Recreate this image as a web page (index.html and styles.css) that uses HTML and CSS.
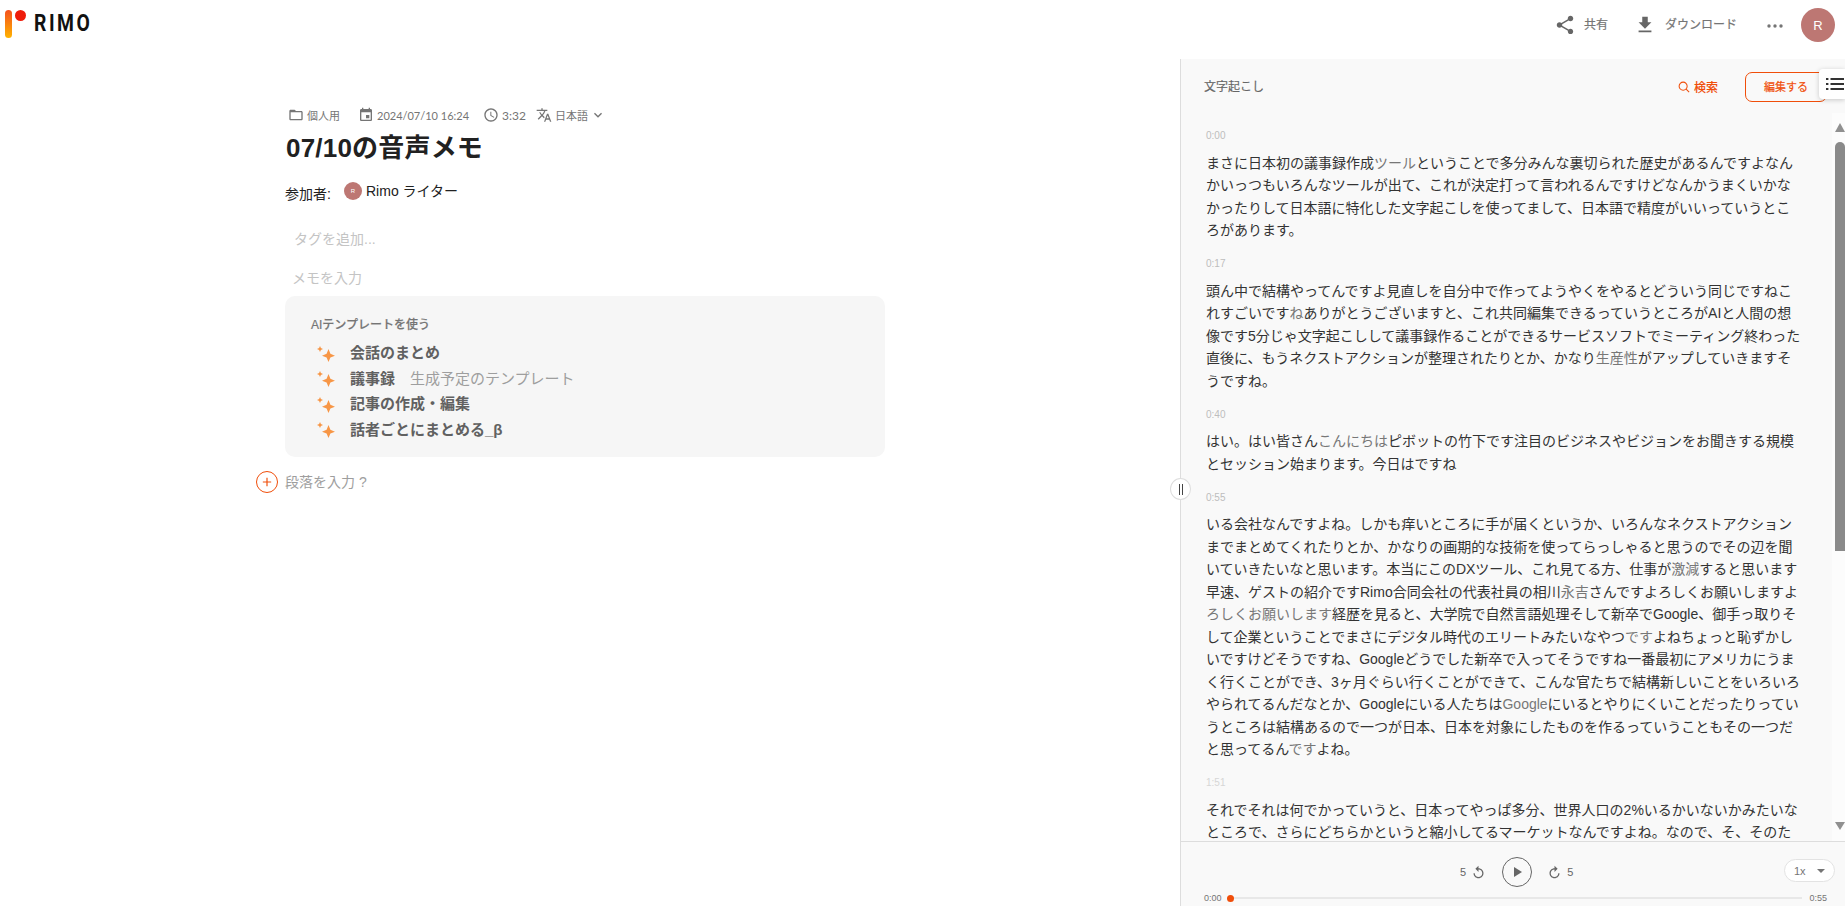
FILE: index.html
```html
<!DOCTYPE html>
<html lang="ja">
<head>
    <meta charset="UTF-8">
    <title>07/10の音声メモ - Rimo</title>
    <link rel="stylesheet" href="styles.css">
</head>
<body>

<header class="topbar">
    <div class="logo">
        <div class="logo-mark"><span class="logo-bar"></span><span class="logo-dot"></span></div>
        <span class="logo-text">RIMO</span>
    </div>
    <div class="top-actions">
        <div class="top-action top-share">
            <svg class="icon-share" viewBox="0 0 24 24"><path d="M18 16.08c-.76 0-1.44.3-1.96.77L8.91 12.7c.05-.23.09-.46.09-.7s-.04-.47-.09-.7l7.05-4.11c.54.5 1.25.81 2.04.81 1.66 0 3-1.34 3-3s-1.34-3-3-3-3 1.34-3 3c0 .24.04.47.09.7L8.04 9.81C7.5 9.31 6.79 9 6 9c-1.66 0-3 1.34-3 3s1.34 3 3 3c.79 0 1.5-.31 2.04-.81l7.12 4.16c-.05.21-.08.43-.08.65 0 1.61 1.31 2.92 2.92 2.92 1.61 0 2.92-1.31 2.92-2.92s-1.31-2.92-2.92-2.92z"/></svg>
            <span>共有</span>
        </div>
        <div class="top-action top-download">
            <svg class="icon-download" viewBox="0 0 24 24"><path d="M19 9h-4V3H9v6H5l7 7 7-7zM5 18v2h14v-2H5z"/></svg>
            <span>ダウンロード</span>
        </div>
        <svg class="icon-more" viewBox="0 0 16 4"><circle cx="2" cy="2" r="1.7"/><circle cx="8" cy="2" r="1.7"/><circle cx="14" cy="2" r="1.7"/></svg>
        <div class="avatar">R</div>
    </div>
</header>

<main class="layout">
    <section class="doc">
        <div class="meta">
            <svg class="meta-icon" viewBox="0 0 24 24"><path d="M20 6h-8l-2-2H4c-1.1 0-1.99.9-1.99 2L2 18c0 1.1.9 2 2 2h16c1.1 0 2-.9 2-2V8c0-1.1-.9-2-2-2zm0 12H4V8h16v10z"/></svg>
            <span class="meta-text meta-folder">個人用</span>
            <svg class="meta-icon" viewBox="0 0 24 24"><path d="M17 12h-5v5h5v-5zM16 1v2H8V1H6v2H5c-1.11 0-1.99.9-1.99 2L3 19c0 1.1.89 2 2 2h14c1.1 0 2-.9 2-2V5c0-1.1-.9-2-2-2h-1V1h-2zm3 18H5V8h14v11z"/></svg>
            <span class="meta-text meta-date">2024/07/10 16:24</span>
            <svg class="meta-icon" viewBox="0 0 24 24"><path d="M11.99 2C6.47 2 2 6.48 2 12s4.47 10 9.99 10C17.52 22 22 17.52 22 12S17.52 2 11.99 2zM12 20c-4.42 0-8-3.58-8-8s3.58-8 8-8 8 3.58 8 8-3.58 8-8 8zm.5-13H11v6l5.25 3.15.75-1.23-4.5-2.67z"/></svg>
            <span class="meta-text meta-time">3:32</span>
            <svg class="meta-icon" viewBox="0 0 24 24"><path d="M12.87 15.07l-2.54-2.51.03-.03c1.74-1.94 2.98-4.17 3.71-6.53H17V4h-7V2H8v2H1v1.99h11.17C11.5 7.92 10.44 9.75 9 11.35 8.07 10.32 7.3 9.19 6.69 8h-2c.73 1.63 1.73 3.17 2.98 4.56l-5.09 5.02L4 19l5-5 3.11 3.11.76-2.04zM18.5 10h-2L12 22h2l1.12-3h4.75L21 22h2l-4.5-12zm-2.62 7l1.62-4.33L19.12 17h-3.24z"/></svg>
            <span class="meta-text">日本語</span>
            <svg class="meta-icon meta-chevron" viewBox="0 0 24 24"><path d="M16.59 8.59L12 13.17 7.41 8.59 6 10l6 6 6-6z"/></svg>
        </div>

        <h1>07/10の音声メモ</h1>

        <div class="participants">
            <span class="participants-label">参加者:</span>
            <span class="avatar avatar-small">R</span>
            <span class="participant-name">Rimo ライター</span>
        </div>

        <div class="placeholder placeholder-tag">タグを追加...</div>
        <div class="placeholder placeholder-memo">メモを入力</div>

        <div class="ai-box">
            <div class="ai-title">AIテンプレートを使う</div>
            <div class="ai-item">
                <svg class="sparkle" viewBox="0 0 18 18"><path d="M11.500 5l1.900 4.800 4.600 1.900-4.600 1.900-1.900 4.400-1.900-4.400L5 11.700l4.600-1.900z"/><path d="M3 2l.9 2.100L6 5l-2.100.9L3 8l-.9-2.100L0 5l2.100-.9z"/></svg>
                <b>会話のまとめ</b>
            </div>
            <div class="ai-item">
                <svg class="sparkle" viewBox="0 0 18 18"><path d="M11.500 5l1.900 4.800 4.600 1.900-4.600 1.900-1.900 4.400-1.900-4.400L5 11.700l4.600-1.900z"/><path d="M3 2l.9 2.100L6 5l-2.100.9L3 8l-.9-2.100L0 5l2.100-.9z"/></svg>
                <b>議事録</b>
                <span class="ai-note">生成予定のテンプレート</span>
            </div>
            <div class="ai-item">
                <svg class="sparkle" viewBox="0 0 18 18"><path d="M11.500 5l1.900 4.800 4.600 1.900-4.600 1.900-1.900 4.400-1.900-4.400L5 11.700l4.600-1.900z"/><path d="M3 2l.9 2.100L6 5l-2.100.9L3 8l-.9-2.100L0 5l2.100-.9z"/></svg>
                <b>記事の作成・編集</b>
            </div>
            <div class="ai-item">
                <svg class="sparkle" viewBox="0 0 18 18"><path d="M11.500 5l1.900 4.800 4.600 1.900-4.600 1.900-1.900 4.400-1.900-4.400L5 11.700l4.600-1.900z"/><path d="M3 2l.9 2.100L6 5l-2.100.9L3 8l-.9-2.100L0 5l2.100-.9z"/></svg>
                <b>話者ごとにまとめる_β</b>
            </div>
        </div>

        <div class="add-row">
            <span class="add-circle">
                <svg viewBox="0 0 12 12"><path d="M6 1v10M1 6h10"/></svg>
            </span>
            <span class="add-text">段落を入力 ?</span>
        </div>
    </section>

    <aside class="panel">
        <div class="splitter"><span></span><span></span></div>
        <div class="list-toggle">
            <svg viewBox="0 0 18 14"><path d="M0 1h2.400v2H0zM4.500 1H18v2H4.500zM0 6h2.400v2H0zM4.500 6H18v2H4.500zM0 11h2.400v2H0zM4.500 11H18v2H4.500z"/></svg>
        </div>

        <div class="panel-head">
            <span class="panel-title">文字起こし</span>
            <div class="panel-search">
                <svg viewBox="0 0 14 14"><circle cx="6" cy="6" r="4.700"/><path d="M9.500 9.500L13 13"/></svg>
                <span>検索</span>
            </div>
            <div class="edit-button">編集する</div>
        </div>

        <div class="transcript-wrap">
            <div class="transcript">
                <div class="stamp">0:00</div>
                <p>まさに日本初の議事録作成<span class="dim">ツール</span>ということで多分みんな裏切られた歴史があるんですよなん<br>かいっつもいろんなツールが出て、これが決定打って言われるんですけどなんかうまくいかな<br>かったりして日本語に特化した文字起こしを使ってまして、日本語で精度がいいっていうとこ<br>ろがあります。</p>

                <div class="stamp">0:17</div>
                <p>頭ん中で結構やってんですよ見直しを自分中で作ってようやくをやるとどういう同じですねこ<br>れすごいです<span class="dim">ね</span>ありがとうございますと、これ共同編集できるっていうところがAIと人間の想<br>像です5分じゃ文字起こしして議事録作ることができるサービスソフトでミーティング終わった<br>直後に、もうネクストアクションが整理されたりとか、かなり<span class="dim">生産性</span>がアップしていきますそ<br>うですね。</p>

                <div class="stamp">0:40</div>
                <p>はい。はい皆さん<span class="dim">こんにちは</span>ピボットの竹下です注目のビジネスやビジョンをお聞きする規模<br>とセッション始まります。今日はですね</p>

                <div class="stamp">0:55</div>
                <p>いる会社なんですよね。しかも痒いところに手が届くというか、いろんなネクストアクション<br>までまとめてくれたりとか、かなりの画期的な技術を使ってらっしゃると思うのでその辺を聞<br>いていきたいなと思います。本当にこのDXツール、これ見てる方、仕事が<span class="dim">激減</span>すると思います<br>早速、ゲストの紹介ですRimo合同会社の代表社員の相川<span class="dim">永吉</span>さんですよろしくお願いしますよ<br><span class="dim">ろしくお願いします</span>経歴を見ると、大学院で自然言語処理そして新卒でGoogle、御手っ取りそ<br>して企業ということでまさにデジタル時代のエリートみたいなやつ<span class="dim">です</span>よねちょっと恥ずかし<br>いですけどそうですね、Googleどうでした新卒で入ってそうですね一番最初にアメリカにうま<br>く行くことができ、3ヶ月ぐらい行くことができて、こんな官たちで結構新しいことをいろいろ<br>やられてるんだなとか、Googleにいる人たちは<span class="dim">Google</span>にいるとやりにくいことだったりってい<br>うところは結構あるので一つが日本、日本を対象にしたものを作るっていうこともその一つだ<br>と思ってるん<span class="dim">です</span>よね。</p>

                <div class="stamp stamp-light">1:51</div>
                <p>それでそれは何でかっていうと、日本ってやっぱ多分、世界人口の2%いるかいないかみたいな<br>ところで、さらにどちらかというと縮小してるマーケットなんですよね。なので、そ、そのた</p>
            </div>
            <div class="scrollbar">
                <span class="scroll-up"></span>
                <span class="scroll-thumb"></span>
                <span class="scroll-down"></span>
            </div>
        </div>

        <div class="player">
            <div class="player-controls">
                <span>5</span>
                <svg class="skip-icon" viewBox="0 0 24 24"><path d="M12 5V1L7 6l5 5V7c3.310 0 6 2.690 6 6s-2.690 6-6 6-6-2.690-6-6H4c0 4.420 3.580 8 8 8s8-3.580 8-8-3.580-8-8-8z"/></svg>
                <div class="play-button">
                    <svg viewBox="0 0 8 10"><path d="M0 0l8 5-8 5z"/></svg>
                </div>
                <svg class="skip-icon skip-forward" viewBox="0 0 24 24"><path d="M12 5V1L7 6l5 5V7c3.310 0 6 2.690 6 6s-2.690 6-6 6-6-2.690-6-6H4c0 4.420 3.580 8 8 8s8-3.580 8-8-3.580-8-8-8z"/></svg>
                <span>5</span>
                <div class="speed"><span>1x</span><i class="speed-arrow"></i></div>
            </div>
            <div class="progress">
                <span>0:00</span>
                <div class="progress-track"><i class="progress-dot"></i></div>
                <span>0:55</span>
            </div>
        </div>
    </aside>
</main>

</body>
</html>
```

FILE: styles.css
```css
* {
    box-sizing: border-box;
}
body {
    margin: 0;
    height: 906px;
    overflow: hidden;
    background-color: #fff;
    color: #212121;
    font-family: "Liberation Sans", "Noto Sans CJK JP", sans-serif;
}

/* top bar */
.topbar {
    height: 59px;
    display: flex;
    justify-content: space-between;
    align-items: flex-start;
}
.logo {
    display: flex;
    align-items: flex-start;
    padding: 10px 0 0 5px;
}
.logo-mark {
    width: 21px;
    height: 28px;
    display: flex;
    align-items: flex-start;
    gap: 3px;
}
.logo-bar {
    width: 7px;
    height: 28px;
    border-radius: 4px;
    background: linear-gradient(#f4511e, #ffb300);
}
.logo-dot {
    width: 11px;
    height: 11px;
    border-radius: 50%;
    background: #ee1c0a;
}
.logo-text {
    margin: 1px 0 0 8px;
    font-family: "Roboto", sans-serif;
    font-size: 23px;
    line-height: 26px;
    font-weight: 700;
    letter-spacing: 3px;
    color: #111;
    transform: scaleX(0.84);
    transform-origin: left center;
}
.top-actions {
    display: flex;
    align-items: center;
    height: 50px;
    padding-right: 10px;
}
.top-action {
    display: flex;
    align-items: center;
    font-size: 12px;
    color: #757575;
    -webkit-text-stroke: 0.2px #757575;
}
.top-action span {
    margin-bottom: 4px;
}
.top-action svg {
    fill: #666;
}
.icon-share {
    width: 22px;
    height: 22px;
    margin-right: 8px;
}
.icon-download {
    width: 22px;
    height: 22px;
    margin-right: 9px;
}
.top-download {
    margin-left: 26px;
}
.icon-more {
    width: 16px;
    height: 4px;
    margin: 2px 0 0 30px;
    fill: #757575;
}
.avatar {
    width: 34px;
    height: 34px;
    margin-left: 18px;
    border-radius: 50%;
    background-color: #bd7773;
    color: #fff;
    font-size: 13px;
    display: flex;
    align-items: center;
    justify-content: center;
}

/* layout */
.layout {
    display: flex;
    height: 847px;
}
.doc {
    width: 1180px;
    flex: none;
    padding: 48px 0 0 285px;
}

/* document side */
.meta {
    height: 16px;
    display: flex;
    align-items: center;
    padding-left: 3px;
}
.meta-icon {
    width: 16px;
    height: 16px;
    flex: none;
    fill: #757575;
}
.meta-text {
    margin-left: 3px;
    font-family: "Lato", "Noto Sans CJK JP", sans-serif;
    font-size: 11px;
    color: #757575;
    white-space: nowrap;
}
.meta-folder {
    width: 51px;
}
.meta-date {
    width: 106px;
}
.meta-time {
    width: 34px;
    font-size: 12px;
}
.meta-chevron {
    margin-left: 2px;
}
h1 {
    margin: 7px 0 0 1px;
    font-size: 26px;
    line-height: 36px;
    font-weight: 700;
    letter-spacing: 0.2px;
    color: #212121;
}
.participants {
    margin-top: 15px;
    height: 20px;
    display: flex;
    align-items: center;
    font-size: 14px;
    color: #212121;
}
.participants-label {
    width: 59px;
    padding-top: 3px;
}
.participant-name {
    padding-bottom: 3px;
}
.avatar-small {
    width: 18px;
    height: 18px;
    margin: 0 4px 0 0;
    font-size: 6px;
}
.placeholder {
    height: 20px;
    font-size: 14px;
    line-height: 20px;
    color: #c4c4c4;
}
.placeholder-tag {
    margin: 28px 0 0 9px;
}
.placeholder-memo {
    margin: 19px 0 0 7px;
}
.ai-box {
    width: 600px;
    margin-top: 8px;
    padding: 20px 26px 16px;
    border-radius: 10px;
    background-color: #f6f6f6;
}
.ai-title {
    font-size: 12px;
    line-height: 18px;
    font-weight: 500;
    color: #757575;
    -webkit-text-stroke: 0.2px #757575;
}
.ai-title + .ai-item {
    margin-top: 5px;
}
.ai-item {
    height: 25.5px;
    display: flex;
    align-items: center;
    font-size: 15px;
    color: #616161;
}
.ai-item b {
    font-weight: 700;
}
.sparkle {
    width: 18px;
    height: 18px;
    margin: 2px 15px 0 6px;
    fill: #f79646;
}
.ai-note {
    margin-left: 15px;
    color: #9e9e9e;
}
.add-row {
    margin: 14px 0 0 -29px;
    height: 22px;
    display: flex;
    align-items: center;
    gap: 7px;
    font-size: 14px;
    color: #9e9e9e;
}
.add-text {
    padding-bottom: 2px;
}
.add-circle {
    width: 22px;
    height: 22px;
    border: 1px solid #f04e0a;
    border-radius: 50%;
    display: flex;
    align-items: center;
    justify-content: center;
}
.add-circle svg {
    width: 10px;
    height: 10px;
    fill: none;
    stroke: #f04e0a;
    stroke-width: 1.4;
}

/* transcript panel */
.panel {
    position: relative;
    flex: 1;
    display: flex;
    flex-direction: column;
    background-color: #f9f9f9;
    border-left: 1px solid #ddd;
}
.splitter {
    position: absolute;
    left: -11px;
    top: 419px;
    width: 21px;
    height: 22px;
    border: 1px solid #ddd;
    border-radius: 50%;
    background-color: #fff;
    display: flex;
    align-items: center;
    justify-content: center;
    gap: 2px;
}
.splitter span {
    width: 1px;
    height: 11px;
    background-color: #444;
}
.list-toggle {
    position: absolute;
    right: 0;
    top: 10px;
    width: 26px;
    height: 30px;
    border-radius: 4px 0 0 4px;
    background-color: #fff;
    box-shadow: 0 1px 5px rgba(0, 0, 0, 0.2);
    display: flex;
    align-items: center;
    justify-content: flex-end;
    padding-right: 1px;
}
.list-toggle svg {
    width: 18px;
    height: 14px;
    fill: #333;
}
.panel-head {
    height: 54px;
    flex: none;
    display: flex;
    align-items: flex-start;
    padding: 13px 18px 0 23px;
}
.panel-title {
    margin-right: auto;
    font-size: 12px;
    line-height: 31px;
    color: #666;
    -webkit-text-stroke: 0.15px #666;
}
.panel-search {
    height: 29px;
    display: flex;
    align-items: center;
    gap: 4px;
    margin-right: 27px;
    font-size: 12px;
    font-weight: 500;
    color: #f04e0a;
    -webkit-text-stroke: 0.1px #f04e0a;
}
.panel-search svg {
    width: 12px;
    height: 12px;
    fill: none;
    stroke: #f04e0a;
    stroke-width: 1.200;
}
.edit-button {
    width: 82px;
    height: 30px;
    border: 1px solid #f04e0a;
    border-radius: 7px;
    font-size: 11px;
    line-height: 28px;
    padding-left: 18px;
    color: #f04e0a;
    -webkit-text-stroke: 0.2px #f04e0a;
}
.transcript-wrap {
    flex: 1;
    min-height: 0;
    display: flex;
}
.transcript {
    flex: 1;
    min-width: 0;
    overflow: hidden;
    padding: 16px 0 0 25px;
}
.stamp {
    height: 14px;
    font-size: 10px;
    line-height: 14px;
    color: #bdbdbd;
}
.stamp-light {
    color: #d6d6d6;
}
.transcript p {
    margin: 8.5px 0 15.5px;
    font-size: 14px;
    line-height: 22.5px;
    color: #333;
    white-space: nowrap;
}
.dim {
    color: #777;
}
.scrollbar {
    width: 13px;
    flex: none;
    display: flex;
    flex-direction: column;
    align-items: flex-end;
    background-color: #fcfcfc;
}
.scroll-up {
    margin-top: 10px;
    border: 5px solid transparent;
    border-top: 0;
    border-bottom: 9px solid #909090;
}
.scroll-thumb {
    width: 10px;
    height: 409px;
    margin-top: 10px;
    border-radius: 5px 5px 0 0;
    background-color: #8a8a8a;
}
.scroll-down {
    margin-top: auto;
    margin-bottom: 11px;
    border: 5px solid transparent;
    border-bottom: 0;
    border-top: 8px solid #909090;
}

/* player */
.player {
    height: 65px;
    flex: none;
    border-top: 1px solid #ddd;
    padding: 15px 10px 0 23px;
}
.player-controls {
    position: relative;
    height: 30px;
    display: flex;
    align-items: center;
    justify-content: flex-start;
    padding-left: 256px;
    font-size: 11px;
    color: #666;
}
.skip-icon {
    width: 15px;
    height: 15px;
    margin-left: 5px;
    fill: #666;
}
.skip-forward {
    margin: 0 5px 0 0;
    transform: scaleX(-1);
}
.play-button {
    width: 30px;
    height: 30px;
    margin: 0 15px 0 16px;
    border: 1px solid #666;
    border-radius: 50%;
    display: flex;
    align-items: center;
    justify-content: center;
    padding-left: 2px;
}
.play-button svg {
    width: 8px;
    height: 10px;
    fill: #666;
}
.speed {
    position: absolute;
    right: 0;
    top: 2px;
    width: 51px;
    height: 23px;
    border: 1px solid #e3e3e3;
    border-radius: 12px;
    background-color: #fff;
    display: flex;
    align-items: center;
    justify-content: space-between;
    padding: 0 9px;
    font-size: 11px;
    color: #757575;
}
.speed-arrow {
    border: 4px solid transparent;
    border-bottom: 0;
    border-top: 4px solid #757575;
}
.progress {
    margin-top: 4px;
    height: 14px;
    display: flex;
    align-items: center;
    font-size: 9px;
    color: #757575;
}
.progress-track {
    position: relative;
    width: 575px;
    height: 2px;
    margin: 0 8px 0 5px;
    background-color: #e8e8e8;
}
.progress-dot {
    position: absolute;
    left: 0;
    top: -2.500px;
    width: 7px;
    height: 7px;
    border-radius: 50%;
    background-color: #f04e0a;
}
```
